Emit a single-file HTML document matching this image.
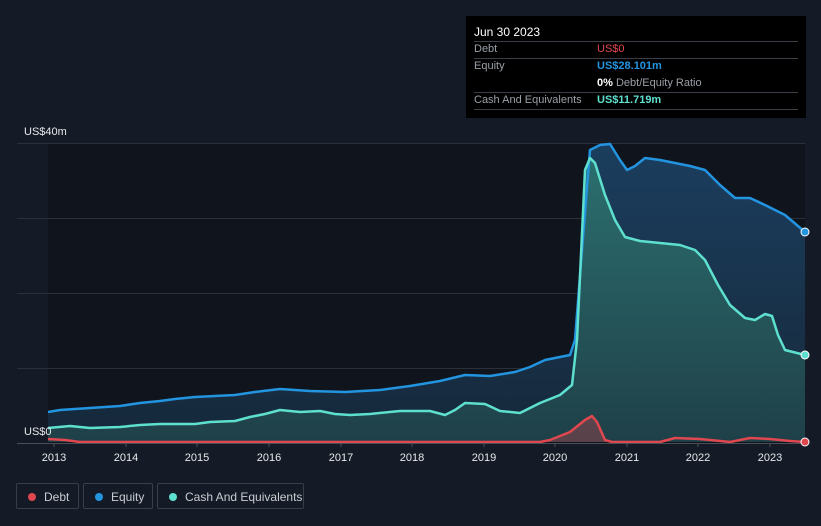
<!DOCTYPE html>
<html><head><meta charset="utf-8"><style>
body{margin:0;width:821px;height:526px;background:#151b26;font-family:"Liberation Sans",sans-serif;overflow:hidden;position:relative}
.tt{position:absolute;left:466px;top:16px;width:340px;height:102px;background:#000;color:#fff;font-size:11px}
.tt .r{position:absolute;left:8px;width:324px;border-top:1px solid #3a3f47}
.lab{color:#9aa0a8;position:absolute;left:8px}
.val{position:absolute;left:131px}
.leg{position:absolute;top:483px;height:26px;border:1px solid #3a3f47;border-radius:2px;color:#c9ccd1;font-size:12px;line-height:26px;box-sizing:border-box}
.leg i{position:absolute;left:11px;top:9px;width:8px;height:8px;border-radius:50%}
.leg span{position:absolute;left:27px}
.ax{position:absolute;color:#e6e8eb;font-size:11px}
</style></head><body>
<svg width="821" height="526" style="position:absolute;left:0;top:0">
<defs>
<linearGradient id="ge" x1="0" y1="0" x2="0" y2="1"><stop offset="0" stop-color="#1b3e5e"/><stop offset="1" stop-color="#16283a"/></linearGradient>
<linearGradient id="gc" x1="0" y1="0" x2="0" y2="1"><stop offset="0" stop-color="#2b6f6f"/><stop offset="1" stop-color="#1f4048"/></linearGradient>
</defs>
<rect x="48" y="143" width="757" height="300" fill="#10151d"/>
<g stroke="#2c3139" stroke-width="1">
<line x1="17" y1="143.5" x2="805" y2="143.5"/><line x1="17" y1="218.5" x2="805" y2="218.5"/><line x1="17" y1="293.5" x2="805" y2="293.5"/><line x1="17" y1="368.5" x2="805" y2="368.5"/>
</g>
<path fill="url(#ge)" d="M48,412 L60,410 L90,408 L120,406 L140,403 L160,401 L175,399 L195,397 L215,396 L235,395 L255,392 L280,389 L310,391 L345,392 L380,390 L410,386 L440,381 L465,375 L490,376 L515,372 L530,367 L545,360 L570,355 L575,340 L582,250 L590,150 L600,145 L610,144 L620,160 L627,170 L635,166 L645,158 L660,160 L690,166 L705,170 L720,185 L735,198 L750,198 L765,205 L785,215 L805,232 L805,442 L48,442Z"/>
<path fill="url(#gc)" d="M48,428 L70,426 L90,428 L120,427 L140,425 L160,424 L195,424 L210,422 L235,421 L250,417 L265,414 L280,410 L300,412 L320,411 L335,414 L350,415 L370,414 L400,411 L430,411 L445,415 L455,410 L465,403 L485,404 L500,411 L520,413 L530,408 L540,403 L560,395 L572,385 L577,340 L585,170 L590,158 L595,163 L605,195 L615,220 L625,237 L640,241 L660,243 L680,245 L695,250 L705,260 L718,285 L730,305 L745,318 L755,320 L765,314 L772,316 L778,335 L785,350 L805,355 L805,442 L48,442Z"/>
<path fill="none" stroke="#2394df" stroke-width="2.5" stroke-linejoin="round" d="M48,412 L60,410 L90,408 L120,406 L140,403 L160,401 L175,399 L195,397 L215,396 L235,395 L255,392 L280,389 L310,391 L345,392 L380,390 L410,386 L440,381 L465,375 L490,376 L515,372 L530,367 L545,360 L570,355 L575,340 L582,250 L590,150 L600,145 L610,144 L620,160 L627,170 L635,166 L645,158 L660,160 L690,166 L705,170 L720,185 L735,198 L750,198 L765,205 L785,215 L805,232"/>
<path fill="none" stroke="#5ee0cf" stroke-width="2.5" stroke-linejoin="round" d="M48,428 L70,426 L90,428 L120,427 L140,425 L160,424 L195,424 L210,422 L235,421 L250,417 L265,414 L280,410 L300,412 L320,411 L335,414 L350,415 L370,414 L400,411 L430,411 L445,415 L455,410 L465,403 L485,404 L500,411 L520,413 L530,408 L540,403 L560,395 L572,385 L577,340 L585,170 L590,158 L595,163 L605,195 L615,220 L625,237 L640,241 L660,243 L680,245 L695,250 L705,260 L718,285 L730,305 L745,318 L755,320 L765,314 L772,316 L778,335 L785,350 L805,355"/>
<path fill="rgba(230,70,80,0.3)" d="M540,442 L550,440 L570,432 L585,420 L592,416 L597,422 L605,440 L612,442Z"/>
<path fill="none" stroke="#e0474f" stroke-width="2.5" stroke-linejoin="round" d="M48,439 L65,440 L80,442 L540,442 L550,440 L570,432 L585,420 L592,416 L597,422 L605,440 L612,442 L660,442 L675,438 L700,439 L730,442 L750,438 L770,439 L790,441 L805,442"/>
<line x1="17" y1="443.5" x2="805" y2="443.5" stroke="#4a4f57"/>
<g stroke="#4a4f57"><line x1="54" y1="443" x2="54" y2="447"/><line x1="126" y1="443" x2="126" y2="447"/><line x1="197" y1="443" x2="197" y2="447"/><line x1="269" y1="443" x2="269" y2="447"/><line x1="341" y1="443" x2="341" y2="447"/><line x1="412" y1="443" x2="412" y2="447"/><line x1="484" y1="443" x2="484" y2="447"/><line x1="555" y1="443" x2="555" y2="447"/><line x1="627" y1="443" x2="627" y2="447"/><line x1="698" y1="443" x2="698" y2="447"/><line x1="770" y1="443" x2="770" y2="447"/></g>
<circle cx="805" cy="232" r="4" fill="#2394df" stroke="#fff" stroke-width="1"/>
<circle cx="805" cy="355" r="4" fill="#5ee0cf" stroke="#fff" stroke-width="1"/>
<circle cx="805" cy="442" r="4" fill="#e0474f" stroke="#fff" stroke-width="1"/>
<g fill="#e6e8eb" font-size="11" font-family="Liberation Sans" text-anchor="middle">
<text x="54" y="461">2013</text><text x="126" y="461">2014</text><text x="197" y="461">2015</text><text x="269" y="461">2016</text><text x="341" y="461">2017</text><text x="412" y="461">2018</text><text x="484" y="461">2019</text><text x="555" y="461">2020</text><text x="627" y="461">2021</text><text x="698" y="461">2022</text><text x="770" y="461">2023</text>
</g>
<text x="24" y="135" fill="#e6e8eb" font-size="11" font-family="Liberation Sans">US$40m</text>
<text x="24" y="435" fill="#e6e8eb" font-size="11" font-family="Liberation Sans">US$0</text>
</svg>
<div class="tt">
<div style="position:absolute;left:8px;top:9px;font-size:12px">Jun 30 2023</div>
<div class="r" style="top:25px"></div>
<div class="lab" style="top:27px">Debt</div><div class="val" style="top:27px;color:#e0474f">US$0</div>
<div class="r" style="top:42px"></div>
<div class="lab" style="top:44px">Equity</div><div class="val" style="top:44px;color:#2394df;font-weight:bold">US$28.101m</div>
<div class="val" style="top:61px;color:#9aa0a8"><b style="color:#fff">0%</b> Debt/Equity Ratio</div>
<div class="r" style="top:76px"></div>
<div class="lab" style="top:78px">Cash And Equivalents</div><div class="val" style="top:78px;color:#5ee0cf;font-weight:bold">US$11.719m</div>
<div class="r" style="top:93px"></div>
</div>
<div class="leg" style="left:16px;width:63px"><i style="background:#e0474f"></i><span>Debt</span></div>
<div class="leg" style="left:83px;width:70px"><i style="background:#2394df"></i><span>Equity</span></div>
<div class="leg" style="left:157px;width:147px"><i style="background:#5ee0cf"></i><span>Cash And Equivalents</span></div>
</body></html>
